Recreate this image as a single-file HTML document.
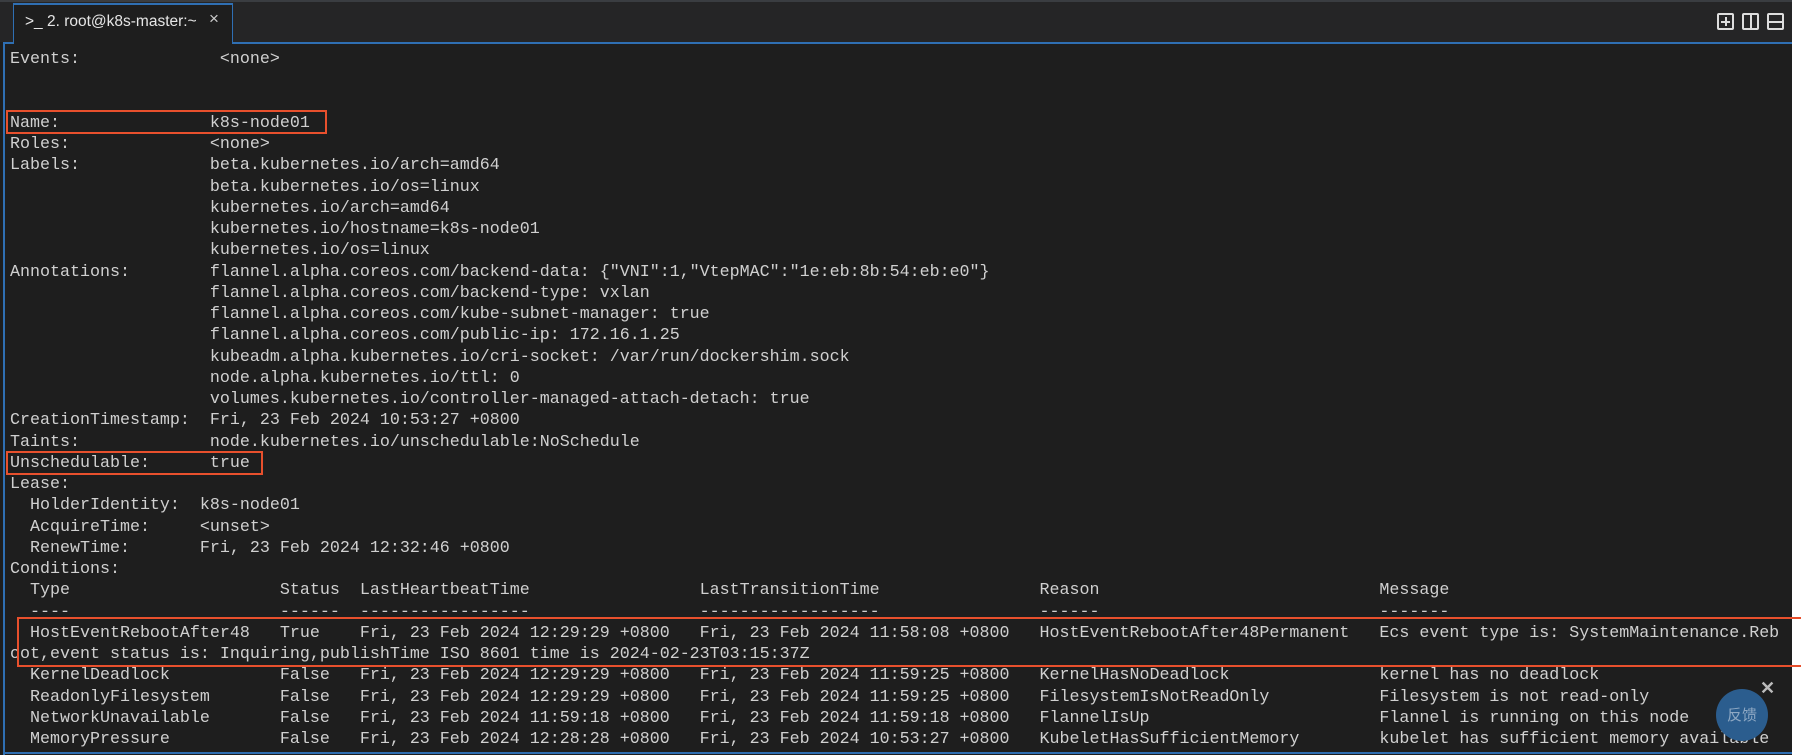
<!DOCTYPE html>
<html><head><meta charset="utf-8"><style>
html,body{margin:0;padding:0;}
body{width:1801px;height:755px;background:#fff;position:relative;overflow:hidden;}
#win{position:absolute;left:0;top:0;width:1792px;height:755px;background:#1e1e1e;}
#bar{position:absolute;left:0;top:0;width:1792px;height:42px;background:#252526;border-top:2px solid #3a3d41;box-sizing:border-box;}
#tab{position:absolute;left:13px;top:3px;width:220px;height:41px;background:#1e1e1e;border-top:2px solid #2f6fb3;border-left:1px solid #2f6fb3;border-right:1px solid #2f6fb3;box-sizing:border-box;z-index:2;}
#tab span{position:absolute;left:11px;top:8px;font:15.5px "Liberation Sans",sans-serif;color:#e6e6e6;white-space:nowrap;}
#tab i{position:absolute;left:195px;top:4px;font:17px "Liberation Sans",sans-serif;color:#ccc;font-style:normal;}
#line{position:absolute;left:3px;top:42px;width:1789px;height:2px;background:#2f6fb3;}
#lb{position:absolute;left:3px;top:42px;width:2px;height:713px;background:#2f6fb3;}
#bb{position:absolute;left:3px;top:752px;width:1789px;height:2px;background:#2f6fb3;}
pre{position:absolute;left:10px;top:49px;margin:0;font:16.67px/21.25px "Liberation Mono",monospace;color:#d0d0d0;white-space:pre;}
.box{position:absolute;border:2px solid #e8502d;box-sizing:border-box;}
.ic{position:absolute;top:13px;width:17px;height:17px;border:2px solid #ddd;border-radius:2px;box-sizing:border-box;}
#fb{position:absolute;left:1716px;top:689px;width:52px;height:52px;border-radius:50%;background:#2b5d8e;color:#8fa9c4;font:15px "Noto Sans CJK SC",sans-serif;text-align:center;line-height:52px;}
#fx{position:absolute;left:1760px;top:678px;color:#bbb;font:bold 18px "Liberation Sans",sans-serif;}
</style></head><body>
<div id="win">
<div id="bar"></div>
<div id="tab"><span>&gt;_ 2. root@k8s-master:~</span><i>×</i></div>
<div id="line"></div><div id="lb"></div><div id="bb"></div>
<div class="ic" style="left:1717px"><div style="position:absolute;left:5.5px;top:2px;width:2px;height:9px;background:#ddd"></div><div style="position:absolute;left:2px;top:5.5px;width:9px;height:2px;background:#ddd"></div></div>
<div class="ic" style="left:1742px"><div style="position:absolute;left:5.5px;top:0;width:2px;height:13px;background:#ddd"></div></div>
<div class="ic" style="left:1767px"><div style="position:absolute;left:0;top:5.5px;width:13px;height:2px;background:#ddd"></div></div>
<pre>Events:              &lt;none&gt;


Name:               k8s-node01
Roles:              &lt;none&gt;
Labels:             beta.kubernetes.io/arch=amd64
                    beta.kubernetes.io/os=linux
                    kubernetes.io/arch=amd64
                    kubernetes.io/hostname=k8s-node01
                    kubernetes.io/os=linux
Annotations:        flannel.alpha.coreos.com/backend-data: {"VNI":1,"VtepMAC":"1e:eb:8b:54:eb:e0"}
                    flannel.alpha.coreos.com/backend-type: vxlan
                    flannel.alpha.coreos.com/kube-subnet-manager: true
                    flannel.alpha.coreos.com/public-ip: 172.16.1.25
                    kubeadm.alpha.kubernetes.io/cri-socket: /var/run/dockershim.sock
                    node.alpha.kubernetes.io/ttl: 0
                    volumes.kubernetes.io/controller-managed-attach-detach: true
CreationTimestamp:  Fri, 23 Feb 2024 10:53:27 +0800
Taints:             node.kubernetes.io/unschedulable:NoSchedule
Unschedulable:      true
Lease:
  HolderIdentity:  k8s-node01
  AcquireTime:     &lt;unset&gt;
  RenewTime:       Fri, 23 Feb 2024 12:32:46 +0800
Conditions:
  Type                     Status  LastHeartbeatTime                 LastTransitionTime                Reason                            Message
  ----                     ------  -----------------                 ------------------                ------                            -------
  HostEventRebootAfter48   True    Fri, 23 Feb 2024 12:29:29 +0800   Fri, 23 Feb 2024 11:58:08 +0800   HostEventRebootAfter48Permanent   Ecs event type is: SystemMaintenance.Reb
oot,event status is: Inquiring,publishTime ISO 8601 time is 2024-02-23T03:15:37Z
  KernelDeadlock           False   Fri, 23 Feb 2024 12:29:29 +0800   Fri, 23 Feb 2024 11:59:25 +0800   KernelHasNoDeadlock               kernel has no deadlock
  ReadonlyFilesystem       False   Fri, 23 Feb 2024 12:29:29 +0800   Fri, 23 Feb 2024 11:59:25 +0800   FilesystemIsNotReadOnly           Filesystem is not read-only
  NetworkUnavailable       False   Fri, 23 Feb 2024 11:59:18 +0800   Fri, 23 Feb 2024 11:59:18 +0800   FlannelIsUp                       Flannel is running on this node
  MemoryPressure           False   Fri, 23 Feb 2024 12:28:28 +0800   Fri, 23 Feb 2024 10:53:27 +0800   KubeletHasSufficientMemory        kubelet has sufficient memory available</pre>
</div>
<div class="box" style="left:6px;top:110px;width:321px;height:24px"></div>
<div class="box" style="left:6px;top:451px;width:257px;height:24px"></div>
<div class="box" style="left:17px;top:617px;width:1790px;height:50px"></div>
<div id="fb">反馈</div><div id="fx">✕</div>
</body></html>
